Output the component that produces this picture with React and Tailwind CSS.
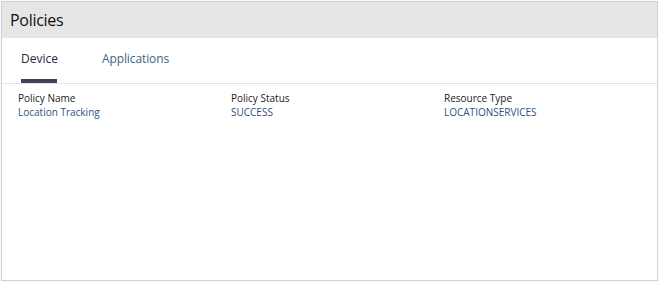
import React, { useState } from 'react';

const columns = [
    { label: 'Policy Name', value: 'Location Tracking' },
    { label: 'Policy Status', value: 'SUCCESS' },
    { label: 'Resource Type', value: 'LOCATIONSERVICES' },
];

const App = () => {
    const [tab, setTab] = useState('device');

    return (
        <div className="w-[660px] h-[282px] bg-white p-px" style={{ fontFamily: '"Open Sans", "Noto Sans", sans-serif' }}>
            <div className="h-[280px] w-[657px] border border-[#d2d2d2] shadow-[0_0_1px_#dcdcdc] bg-white flex flex-col">
                <div className="h-[36px] bg-[#e6e6e6] flex items-center pl-[8px]">
                    <h2 className="text-[16px] text-[#111] tracking-[-0.3px]">Policies</h2>
                </div>

                <div className="flex h-[46px] border-b border-[#e4e4e4] pl-[19px]">
                    <button onClick={() => setTab('device')} className="relative flex items-center pr-[44px] pb-[3px] text-[12px]">
                        <span className={tab === 'device' ? 'text-[#1f2a44]' : 'text-[#3c6583]'}>Device</span>
                        {tab === 'device' ? <span className="absolute left-0 bottom-0 w-[36px] h-[4px] bg-[#3d4459]" /> : null}
                    </button>
                    <button onClick={() => setTab('apps')} className="relative flex items-center pb-[3px] text-[12px] tracking-[-0.1px]">
                        <span className={tab === 'apps' ? 'text-[#1f2a44]' : 'text-[#3c6583]'}>Applications</span>
                        {tab === 'apps' ? <span className="absolute left-0 bottom-0 w-[67px] h-[4px] bg-[#3d4459]" /> : null}
                    </button>
                </div>

                <div className="grid grid-cols-3 pl-[16px] pt-[7px] text-[10px] leading-[14px]">
                    {columns.map((c) => (
                        <div key={c.label}>
                            <div className="text-[#1a1a1a]">{c.label}</div>
                            <div className="text-[#30507a]">{c.value}</div>
                        </div>
                    ))}
                </div>
            </div>
        </div>
    );
};

export default App;
